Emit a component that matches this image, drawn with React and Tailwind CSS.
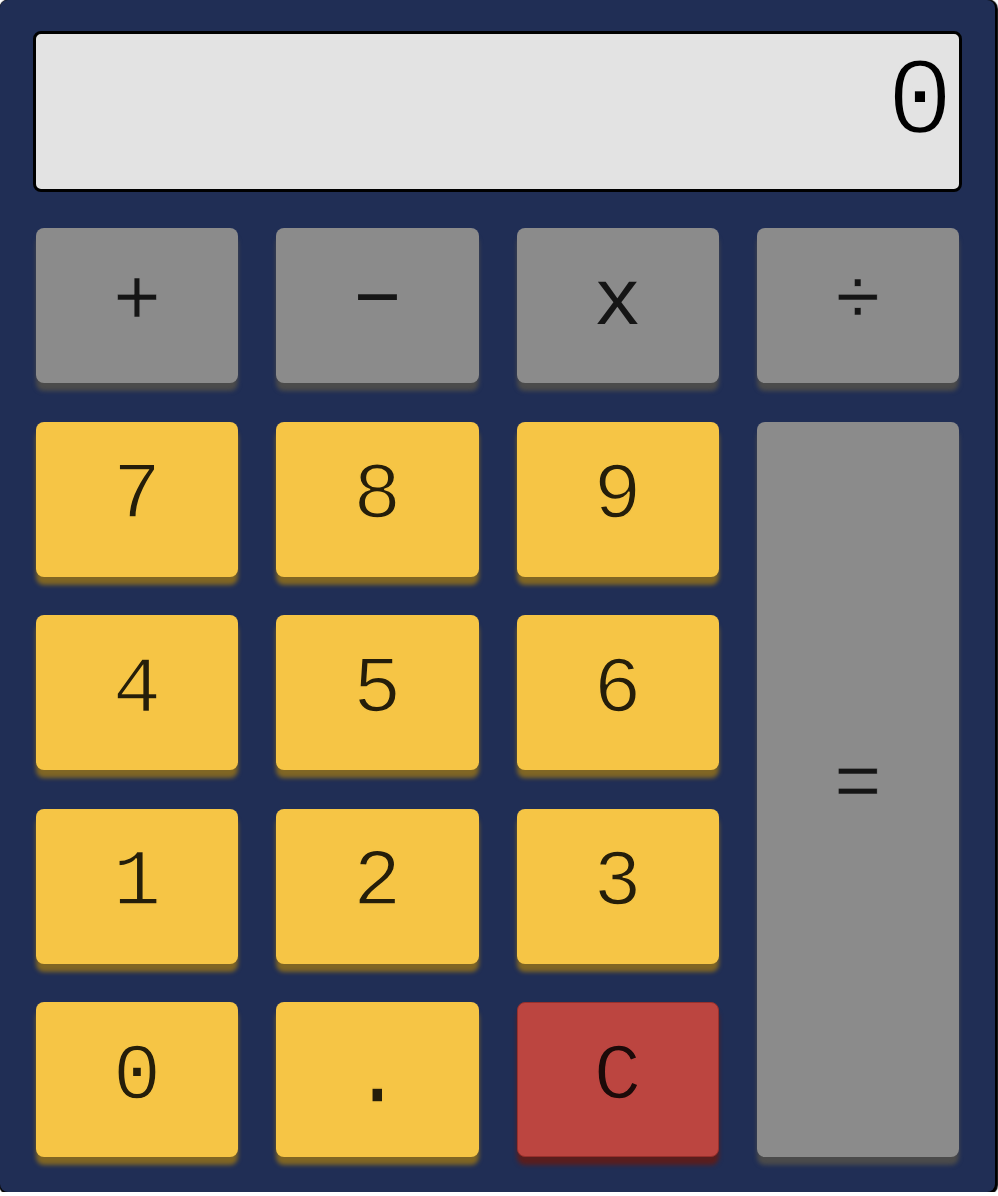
import React, { useState } from "react";

const font = { fontFamily: '"Liberation Mono", "DejaVu Sans Mono", monospace' };

// the thin typewriter look: stroke in the key colour eats into the glyph
const kinds = {
  op: "bg-[#8b8b8b] shadow-[0_8px_4px_#4b4b4b] [-webkit-text-stroke:0.5px_#8b8b8b]",
  num: "bg-[#f6c545] shadow-[0_8px_4px_#806624] [-webkit-text-stroke:1.5px_#f6c545]",
  clear: "bg-[#bc4540] border border-[#98302c] shadow-[0_8px_4px_#5a1e1e] [-webkit-text-stroke:1.5px_#bc4540]",
};

const Key = ({ label, kind = "num", className = "", onClick }) => (
  <button
    onClick={onClick}
    className={`flex items-center justify-center rounded-lg text-[80px] leading-none text-black/85 pb-[6px] ${kinds[kind]} ${className}`}
  >
    {label}
  </button>
);

const App = () => {
  const [value, setValue] = useState("0");

  const press = (k) => {
    if (k === "C") return setValue("0");
    if (k === "=") {
      try {
        const expr = value.replace(/x/g, "*").replace(/÷/g, "/").replace(/−/g, "-");
        // eslint-disable-next-line no-new-func
        setValue(String(Function(`return (${expr})`)()));
      } catch {
        setValue("Error");
      }
      return;
    }
    setValue((v) => (v === "0" && /[0-9]/.test(k) ? k : v + k));
  };

  const rows = [
    ["7", "8", "9"],
    ["4", "5", "6"],
    ["1", "2", "3"],
  ];

  return (
    <div className="w-[995px] h-[1192px] rounded-lg bg-[#202e55] shadow-[1px_1px_1px_2px_#000] px-[33px] pt-[31px]" style={font}>
      <div className="h-[161px] w-full rounded-lg border-[3px] border-black bg-[#e3e3e3] flex items-start justify-end pr-[6px] pt-[15px]">
        <span className="text-[110px] leading-none text-black [-webkit-text-stroke:2.5px_#e3e3e3]">{value}</span>
      </div>

      <div className="mt-[36px] mx-[3px] h-[929px] grid grid-cols-4 grid-rows-5 gap-x-[38px] gap-y-[38.5px]">
        <Key label="+" kind="op" onClick={() => press("+")} />
        <Key label="−" kind="op" className="[-webkit-text-stroke:0px]" onClick={() => press("−")} />
        <Key label="x" kind="op" className="[-webkit-text-stroke:0px]" onClick={() => press("x")} />
        <Key label="÷" kind="op" onClick={() => press("÷")} />

        {rows[0].map((n) => (
          <Key key={n} label={n} onClick={() => press(n)} />
        ))}
        <Key label="=" kind="op" className="row-span-4" onClick={() => press("=")} />
        {rows.slice(1).flat().map((n) => (
          <Key key={n} label={n} onClick={() => press(n)} />
        ))}

        <Key label="0" onClick={() => press("0")} />
        <Key label="." className="text-[96px] [-webkit-text-stroke:0px]" onClick={() => press(".")} />
        <Key label="C" kind="clear" onClick={() => press("C")} />
      </div>
    </div>
  );
};

export default App;
